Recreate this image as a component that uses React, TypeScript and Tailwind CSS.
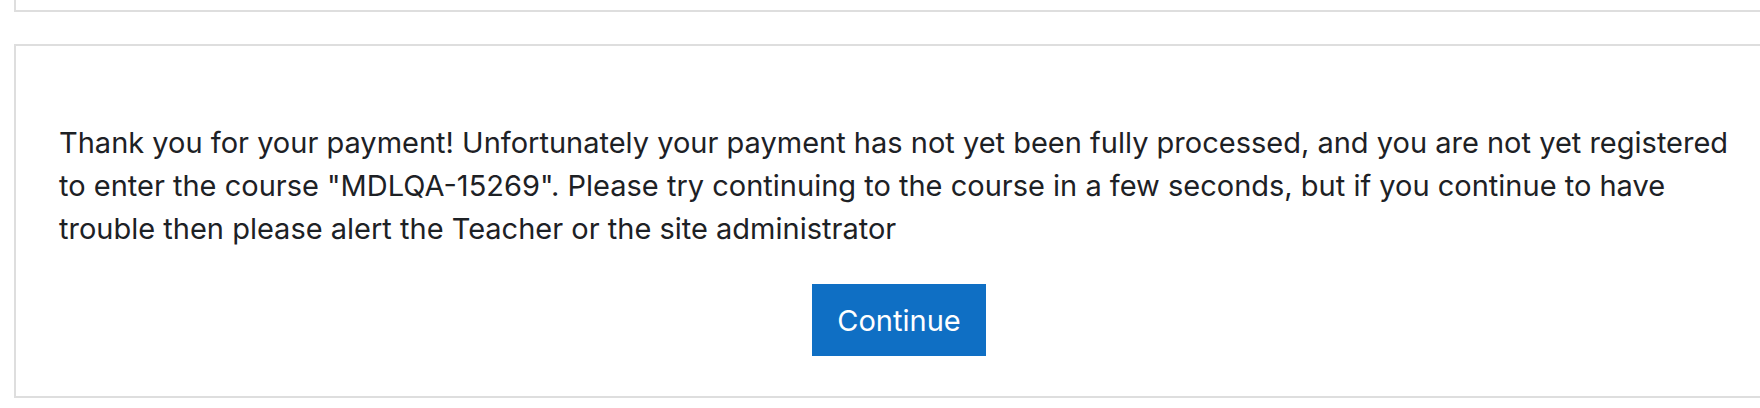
import React from 'react';

const App: React.FC = () => {
    return (
        <div className="w-full h-[408px] overflow-hidden bg-white font-['Inter','Liberation_Sans',sans-serif] text-[#1d2125]">
            {/* previous block, mostly scrolled off */}
            <div className="ml-[14px] w-[1770px] h-[12px] border-x-2 border-b-2 border-[#dedede] bg-white"></div>

            {/* payment notice */}
            <div className="ml-[14px] mt-8 w-[1770px] border-2 border-[#dedede] bg-white pt-[75px] pb-[40px] px-[43px]">
                <p className="text-[29px] leading-[43px] whitespace-nowrap">
                    Thank you for your payment! Unfortunately your payment has not yet been fully processed, and you are not yet registered
                    <br />
                    to enter the course "MDLQA-15269". Please try continuing to the course in a few seconds, but if you continue to have
                    <br />
                    trouble then please alert the Teacher or the site administrator
                </p>
                <div className="flex justify-center mt-[34px]">
                    <button className="h-[72px] w-[174px] bg-[#0f6fc4] text-white text-[29px] leading-none">
                        Continue
                    </button>
                </div>
            </div>
        </div>
    );
};

export default App;
